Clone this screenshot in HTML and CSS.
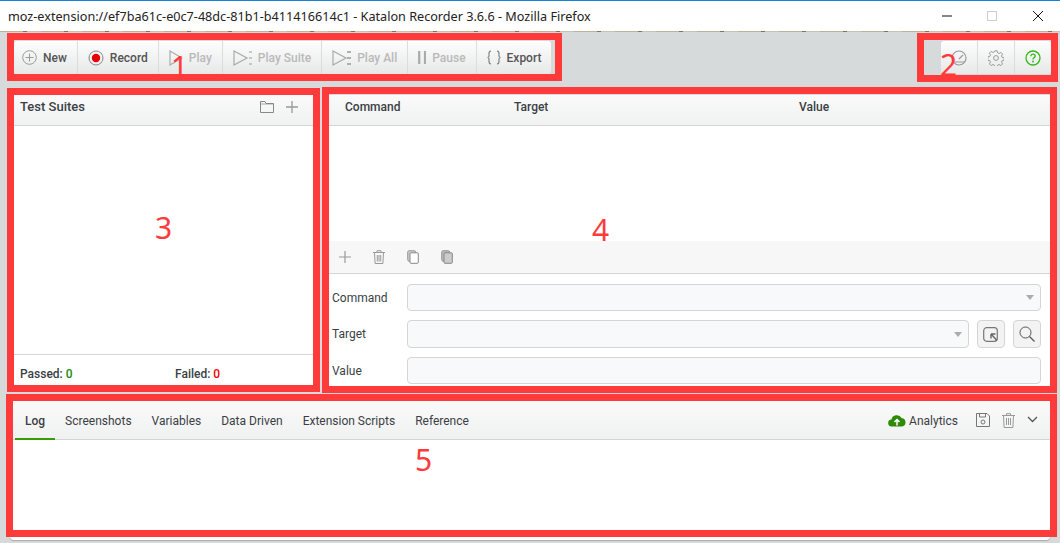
FILE: index.html
```html
<!DOCTYPE html>
<html>
<head>
<meta charset="utf-8">
<title>Katalon Recorder</title>
<link rel="stylesheet" href="styles.css">
</head>
<body>

<div class="titlebar">
  <span class="title">moz-extension://ef7ba61c-e0c7-48dc-81b1-b411416614c1 - Katalon Recorder 3.6.6 - Mozilla Firefox</span>
  <div class="winctl">
    <svg width="46" height="20" viewBox="0 0 46 20"><path d="M18 15h10" stroke="#111" stroke-width="1"/></svg>
    <svg width="46" height="20" viewBox="0 0 46 20"><rect x="17.5" y="10.5" width="9" height="9" fill="none" stroke="#ccc"/></svg>
    <svg width="46" height="20" viewBox="0 0 46 20"><path d="M17 10l10 10M27 10l-10 10" stroke="#111" fill="none"/></svg>
  </div>
</div>
<div class="strip"></div>

<div class="toolrow">
  <div class="toolbar">
    <div class="btn btn-first">
      <svg width="15" height="15" viewBox="0 0 15 15"><circle cx="7.5" cy="7.5" r="6.8" fill="none" stroke="#999"/><path d="M7.5 3.5v8M3.5 7.5h8" stroke="#999"/></svg>
      New
    </div>
    <div class="btn">
      <svg width="16" height="16" viewBox="0 0 16 16"><circle cx="8" cy="8" r="7" fill="none" stroke="#888"/><circle cx="8" cy="8" r="4.2" fill="#e60000"/></svg>
      Record
    </div>
    <div class="btn off">
      <svg width="14" height="16" viewBox="0 0 14 16"><path d="M1 1v14l12-7z" fill="none" stroke="#aaa" stroke-width="1.2"/></svg>
      Play
    </div>
    <div class="btn off">
      <svg width="19" height="16" viewBox="0 0 19 16"><path d="M1 1v14l13-7z" fill="none" stroke="#aaa" stroke-width="1.2"/><path d="M16 2h3M16 8h3M16 14h3" stroke="#bbb" stroke-width="1.5"/></svg>
      Play Suite
    </div>
    <div class="btn off">
      <svg width="19" height="16" viewBox="0 0 19 16"><path d="M1 1v14l13-7z" fill="none" stroke="#aaa" stroke-width="1.2"/><path d="M15 2h4M15 8h4M15 14h4" stroke="#999" stroke-width="1.5"/></svg>
      Play All
    </div>
    <div class="btn off">
      <svg width="8" height="15" viewBox="0 0 8 15"><path d="M1.2 1v13M7 1v13" stroke="#aaa" stroke-width="2.2"/></svg>
      Pause
    </div>
    <div class="btn">
      <svg width="14" height="15" viewBox="0 0 14 15"><path d="M4 1C2 1 2 2 2 3.500v2.500C2 7 1.500 7.500 .5 7.500 1.500 7.500 2 8 2 9v2.500C2 13 2 14 4 14M10 1c2 0 2 1 2 2.500v2.500c0 1 .5 1.500 1.500 1.500-1 0-1.500.5-1.500 1.500v2.500c0 1.500 0 2.500-2 2.500" fill="none" stroke="#777" stroke-width="1.1"/></svg>
      Export
    </div>
  </div>
  <div class="toolbar">
    <div class="btn-icon">
      <svg width="16" height="16" viewBox="0 0 16 16"><circle cx="8" cy="8" r="7" fill="none" stroke="#999" stroke-width="1.2"/><path d="M8 9l4-4M3 12h10" stroke="#999" stroke-width="1.2"/></svg>
    </div>
    <div class="btn-icon">
      <svg width="16" height="16" viewBox="0 0 16 16"><path d="M6.800.8h2.400l.4 2 1.500.7 1.800-1.100 1.700 1.700-1.100 1.800.7 1.500 2 .4v2.400l-2 .4-.7 1.500 1.100 1.800-1.700 1.700-1.800-1.100-1.500.7-.4 2H6.800l-.4-2-1.500-.7-1.800 1.100-1.700-1.700 1.100-1.800-.7-1.500-2-.4V6.800l2-.4.7-1.500-1.100-1.800 1.700-1.700 1.800 1.100 1.500-.7z" fill="none" stroke="#999"/><circle cx="8" cy="8" r="2.400" fill="none" stroke="#999"/></svg>
    </div>
    <div class="btn-icon help">
      <svg width="16" height="16" viewBox="0 0 16 16"><circle cx="8" cy="8" r="7" fill="none" stroke="#33b818" stroke-width="1.3"/><path d="M5.800 6.200c0-1.300 1-2.100 2.200-2.100s2.200.8 2.200 2c0 1.700-2.200 1.600-2.200 3.300" fill="none" stroke="#33b818" stroke-width="1.300"/><circle cx="8" cy="11.500" r=".9" fill="#33b818"/></svg>
    </div>
  </div>
</div>

<div class="panels">
  <div class="suites">
    <div class="head suites-head">
      <span class="head-title">Test Suites</span>
      <div class="head-icons">
        <svg width="14" height="12" viewBox="0 0 14 12"><path d="M.5 11.500v-11h4.500l1 2h7.500v9z" fill="none" stroke="#888"/><path d="M.5 3h13" stroke="#888" stroke-width=".7"/></svg>
        <svg width="12" height="12" viewBox="0 0 12 12"><path d="M6 0v12M0 6h12" stroke="#999" stroke-width="1.300"/></svg>
      </div>
    </div>
    <div class="suites-list"></div>
    <div class="suites-foot">
      <span class="count">Passed: <b class="pass">0</b></span>
      <span class="count">Failed: <b class="fail">0</b></span>
    </div>
  </div>

  <div class="editor">
    <div class="head cols">
      <span>Command</span>
      <span>Target</span>
      <span>Value</span>
    </div>
    <div class="rows"></div>
    <div class="cmd-tools">
      <span class="cmd-tool"><svg width="12" height="12" viewBox="0 0 12 12"><path d="M6 0v12M0 6h12" stroke="#999" stroke-width="1.200"/></svg></span>
      <span class="cmd-tool"><svg width="12" height="14" viewBox="0 0 12 14"><path d="M0 2.500h12M4 2.500V.7h4v1.800M1.500 2.500l.6 11h7.800l.6-11M4.300 5v6.500M6 5v6.500M7.700 5v6.500" fill="none" stroke="#999"/></svg></span>
      <span class="cmd-tool"><svg width="12" height="14" viewBox="0 0 12 14"><rect x=".7" y=".7" width="8" height="10.500" rx="1.500" fill="#ccc" stroke="#999"/><rect x="3" y="2.800" width="8.300" height="10.500" rx="1" fill="#fff" stroke="#888"/></svg></span>
      <span class="cmd-tool"><svg width="12" height="14" viewBox="0 0 12 14"><rect x=".7" y=".7" width="8" height="10.500" rx="1.500" fill="#bbb" stroke="#999"/><rect x="3" y="2.800" width="8.300" height="10.500" rx="1" fill="#ccc" stroke="#888"/></svg></span>
    </div>
    <div class="form">
      <div class="form-row">
        <label class="form-label">Command</label>
        <div class="field"><i class="caret"></i></div>
      </div>
      <div class="form-row row-target">
        <label class="form-label">Target</label>
        <div class="field"><i class="caret"></i></div>
        <div class="square">
          <svg width="16" height="15" viewBox="0 0 16 15"><rect x=".7" y=".7" width="13.600" height="13.600" rx="3" fill="none" stroke="#777" stroke-width="1.200"/><path d="M8 7l6 6.500M8 7v4.500M8 7h4.500" fill="none" stroke="#666" stroke-width="1.400"/></svg>
        </div>
        <div class="square">
          <svg width="16" height="16" viewBox="0 0 16 16"><circle cx="6.500" cy="6.500" r="5.500" fill="none" stroke="#555"/><path d="M10.500 10.500l5 5" stroke="#555" stroke-width="1.200"/></svg>
        </div>
      </div>
      <div class="form-row">
        <label class="form-label">Value</label>
        <div class="field"></div>
      </div>
    </div>
  </div>
</div>

<div class="bottom">
  <div class="tabbar">
    <div class="tabs">
      <span class="tab active">Log</span>
      <span class="tab">Screenshots</span>
      <span class="tab">Variables</span>
      <span class="tab">Data Driven</span>
      <span class="tab">Extension Scripts</span>
      <span class="tab">Reference</span>
    </div>
    <div class="tab-tools">
      <span class="analytics">
        <svg width="18" height="14" viewBox="0 0 18 14"><path d="M4 13.500a3.500 3.500 0 0 1-.6-7A5.500 5.500 0 0 1 13.600 5 4.300 4.300 0 0 1 14 13.500z" fill="#2f8a08"/><path d="M9 12.500V7M6.500 9L9 6.500 11.500 9" fill="none" stroke="#fff" stroke-width="1.500"/></svg>
        Analytics
      </span>
      <svg class="save" width="14" height="14" viewBox="0 0 14 14"><path d="M.5.500h10.500l2.500 2.500v10.500H.5z" fill="none" stroke="#777"/><path d="M3.500.5v3.500h6V.5" fill="none" stroke="#777"/><circle cx="7" cy="9" r="2" fill="none" stroke="#777"/></svg>
      <svg class="trash" width="13" height="15" viewBox="0 0 13 15"><path d="M0 2.500h13M4.500 2.500V.7h4v1.800M1.500 2.500l.6 12h8.800l.6-12M4.500 5v7M6.500 5v7M8.500 5v7" fill="none" stroke="#999"/></svg>
      <svg class="chev" width="11" height="7" viewBox="0 0 11 7"><path d="M1 1l4.500 4.500L10 1" fill="none" stroke="#555" stroke-width="1.300"/></svg>
    </div>
  </div>
  <div class="log"></div>
</div>

<div class="note note1"></div>
<div class="note note2"></div>
<div class="note note3"></div>
<div class="note note4"></div>
<div class="note note5"></div>
<span class="num num1">1</span>
<span class="num num2">2</span>
<span class="num num3">3</span>
<span class="num num4">4</span>
<span class="num num5">5</span>

</body>
</html>
```

FILE: styles.css
```css
html, body {
   margin: 0;
   padding: 0;
}

body {
   position: relative;
   width: 1060px;
   height: 543px;
   overflow: hidden;
   background-color: #d6dada;
   font-family: Roboto, "Liberation Sans", sans-serif;
   font-size: 12px;
   color: #3a3f45;
}

/* window title */

.titlebar {
   display: flex;
   justify-content: space-between;
   align-items: center;
   height: 30px;
   padding-left: 8px;
   background-color: white;
   border-top: 1px solid #1583d8;
}

.title {
   font-family: "Noto Sans", sans-serif;
   font-size: 12.65px;
   color: #222;
}

.winctl {
   display: flex;
   align-items: flex-start;
   align-self: flex-start;
   margin-right: -2px;
}

.winctl svg {
   display: block;
}

.strip {
   height: 1px;
   background: repeating-linear-gradient(90deg, #b9b39c 0, #b9b39c 23px, #7d7462 23px, #7d7462 27px, #c4c3b4 27px, #c4c3b4 41px);
}

/* top toolbar */

.toolrow {
   display: flex;
   justify-content: space-between;
   padding: 9px 9px 0 14px;
}

.toolbar {
   display: flex;
   height: 33px;
   gap: 1px;
   background-color: #dcdcdc;
   border-radius: 3px;
   overflow: hidden;
}

.btn, .btn-icon {
   display: flex;
   align-items: center;
   background: linear-gradient(#fdfdfd, #e7e8e8);
}

.btn {
   gap: 6px;
   padding: 0 10px;
   font-weight: 500;
   color: #555;
}

.btn-first {
   padding-left: 8px;
}

.off {
   color: #b9b9b9;
}

.btn-icon {
   justify-content: center;
   width: 36px;
}

.btn svg, .btn-icon svg {
   flex: none;
}

/* middle panels */

.panels {
   display: flex;
   gap: 16px;
   height: 297px;
   margin: 21px 0 0 14px;
}

.suites, .editor {
   display: flex;
   flex-direction: column;
   background-color: white;
}

.suites {
   width: 299px;
}

.editor {
   width: 721px;
}

.head {
   flex: none;
   box-sizing: border-box;
   height: 31px;
   padding-bottom: 7px;
   background: linear-gradient(#fafafa, #f0f1f1);
   border-bottom: 1px solid #d5d5d5;
   font-weight: 500;
   color: #3a3f45;
}

.suites-head {
   display: flex;
   justify-content: space-between;
   align-items: center;
   padding-left: 6px;
   padding-right: 15px;
}

.head-title {
   font-size: 13px;
}

.head-icons {
   display: flex;
   align-items: center;
   gap: 12px;
}

.suites-list {
   flex: 1;
}

.suites-foot {
   display: grid;
   grid-template-columns: 155px 1fr;
   align-items: center;
   height: 37px;
   padding: 0 0 0 6px;
   border-top: 1px solid #d5d5d5;
}

.count {
   font-weight: 500;
}

.pass {
   font-weight: 500;
   color: #1e8a0a;
}

.fail {
   font-weight: 500;
   color: #f00000;
}

.cols {
   display: grid;
   grid-template-columns: 169px 285px 1fr;
   align-items: center;
   padding-left: 16px;
}

.rows {
   height: 115px;
}

.cmd-tools {
   display: flex;
   align-items: center;
   height: 32px;
   padding-left: 0;
   background-color: #f7f7f7;
   border-bottom: 1px solid #d5d5d5;
}

.cmd-tool {
   display: flex;
   justify-content: center;
   width: 34px;
   margin-left: 0;
}

.cmd-tool:first-child {
   margin-left: -1px;
}

.form {
   display: flex;
   flex-direction: column;
   gap: 9px;
   padding: 10px 9px 0 3px;
}

.form-row {
   display: flex;
   align-items: center;
   height: 27px;
}

.row-target {
   height: 28px;
   gap: 8px;
}

.form-label {
   flex: none;
   width: 75px;
}

.row-target .form-label {
   margin-right: -8px;
}

.field {
   flex: 1;
   display: flex;
   justify-content: flex-end;
   align-items: center;
   align-self: stretch;
   padding-right: 6px;
   background-color: #f8f9fa;
   border: 1px solid #d5d5d5;
   border-radius: 4px;
}

.caret {
   width: 0;
   height: 0;
   border-left: 4px solid transparent;
   border-right: 4px solid transparent;
   border-top: 5px solid #a9adb2;
}

.square {
   flex: none;
   display: flex;
   justify-content: center;
   align-items: center;
   align-self: stretch;
   width: 26px;
   background-color: #f3f3f3;
   border: 1px solid #d5d5d5;
   border-radius: 4px;
}

/* bottom panel */

.bottom {
   height: 139px;
   margin: 9px 10px 0 10px;
   background-color: white;
   border-radius: 0 0 4px 4px;
   box-shadow: 0 1px 1px #aaa;
}

.tabbar {
   display: flex;
   justify-content: space-between;
   height: 38px;
   padding-left: 5px;
   background: linear-gradient(#fafafa, #f0f1f1);
   border-bottom: 1px solid #d5d5d5;
}

.tabs {
   display: flex;
}

.tab {
   display: flex;
   align-items: center;
   box-sizing: border-box;
   height: 39px;
   padding: 1px 10px 0;
}

.active {
   font-weight: 500;
   box-shadow: inset 0 -2px #3c9a08;
}

.tab-tools {
   display: flex;
   align-items: center;
   padding-right: 12px;
}

.analytics {
   display: flex;
   align-items: center;
   gap: 3px;
   padding-top: 1px;
}

.analytics svg {
   margin-top: -2px;
}

.save {
   margin-left: 18px;
}

.trash {
   margin-left: 12px;
}

.chev {
   margin-left: 12px;
   margin-top: -2px;
}

/* red annotations */

.note {
   position: absolute;
   box-sizing: border-box;
   border: 7px solid #ff3a3a;
}

.note1 { left: 7px; top: 33px; width: 555px; height: 48px; }
.note2 { left: 917px; top: 33px; width: 141px; height: 49px; }
.note3 { left: 7px; top: 88px; width: 313px; height: 304px; }
.note4 { left: 322px; top: 87px; width: 735px; height: 306px; }
.note5 { left: 6px; top: 394px; width: 1051px; height: 143px; }

.num {
   position: absolute;
   font-family: "Noto Sans", sans-serif;
   font-size: 30px;
   line-height: 30px;
   color: #ff3a3a;
}

.num1 { left: 171px; top: 52px; }
.num2 { left: 940px; top: 50px; }
.num3 { left: 155px; top: 213px; }
.num4 { left: 592px; top: 215px; }
.num5 { left: 415px; top: 445px; }
```
